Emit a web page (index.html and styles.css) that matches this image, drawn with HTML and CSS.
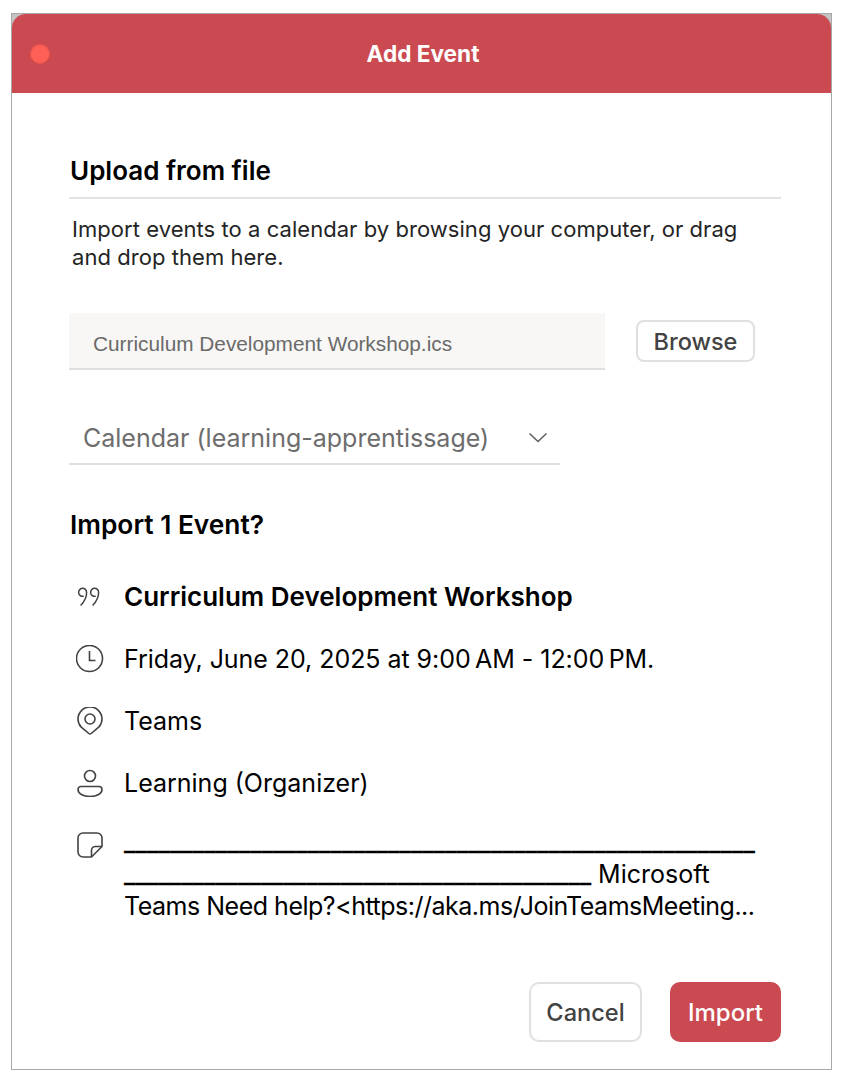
FILE: index.html
```html
<!DOCTYPE html>
<html lang="en">
<head>
<meta charset="utf-8">
<title>Add Event</title>
<link rel="stylesheet" href="styles.css">
</head>
<body>
<div class="window">
  <header class="titlebar">
    <span class="close-dot"></span>
    <span class="title">Add Event</span>
  </header>
  <main class="content">
    <h2 class="section-title">Upload from file</h2>
    <p class="intro">Import events to a calendar by browsing your computer, or drag and drop them here.</p>
    <div class="upload-row">
      <div class="file-field">Curriculum Development Workshop.ics</div>
      <button class="btn btn-browse">Browse</button>
    </div>
    <div class="select-field">
      <span>Calendar (learning-apprentissage)</span>
      <svg class="chevron" width="20" height="12" viewBox="0 0 20 12"><path d="M1.500 1.500 10 9.500l8.500-8"/></svg>
    </div>
    <h3 class="import-title">Import 1 Event?</h3>
    <div class="details">
      <div class="row">
        <svg class="icon icon-thin" width="28" height="28" viewBox="0 0 28 28"><path d="M7.700 13.200a4 4 0 1 1 2.900-3.800c0 5-2.400 9.300-6 13.200M19.700 13.200a4 4 0 1 1 2.900-3.800c0 5-2.400 9.300-6 13.200"/></svg>
        <strong class="row-text">Curriculum Development Workshop</strong>
      </div>
      <div class="row">
        <svg class="icon" width="28" height="28" viewBox="0 0 28 28"><circle cx="13.500" cy="13.500" r="13"/><path d="M13.500 6v9.500h6"/></svg>
        <span class="row-text date-text">Friday, June 20, 2025 at 9:00&#8239;AM - 12:00&#8239;PM.</span>
      </div>
      <div class="row">
        <svg class="icon" width="28" height="28" viewBox="0 0 28 28"><path d="M12.800 26.500 5 19.900a12 12 0 1 1 18 0l-7.800 6.600a1.800 1.800 0 0 1-2.400 0z"/><circle cx="14" cy="12" r="5"/></svg>
        <span class="row-text">Teams</span>
      </div>
      <div class="row">
        <svg class="icon" width="28" height="28" viewBox="0 0 28 28"><circle cx="14" cy="7" r="5.500"/><path d="M5 17.500h18a3 3 0 0 1 3 3c0 4-5 7-12 7s-12-3-12-7a3 3 0 0 1 3-3z"/></svg>
        <span class="row-text">Learning (Organizer)</span>
      </div>
      <div class="row row-note">
        <svg class="icon icon-note" width="28" height="28" viewBox="0 0 28 28"><path d="M7 2h14a5 5 0 0 1 5 5v8.500L15.500 26H7a5 5 0 0 1-5-5V7a5 5 0 0 1 5-5z"/><path d="M26 15.500h-6.500a4 4 0 0 0-4 4V26"/></svg>
        <p class="note"><span class="rule-first">_______________________________________________________</span><wbr><span class="rule-second">_________________________________________</span> Microsoft <span class="note-tail">Teams Need help?&lt;https://aka.ms/JoinTeamsMeeting...</span></p>
      </div>
    </div>
    <footer class="actions">
      <button class="btn btn-cancel">Cancel</button>
      <button class="btn btn-import">Import</button>
    </footer>
  </main>
</div>
</body>
</html>
```

FILE: styles.css
```css
* { box-sizing: border-box; }
html, body { margin: 0; padding: 0; background: #fff; }
body {
  width: 848px;
  height: 1084px;
  overflow: hidden;
  padding: 13px 0 0 11px;
  font-family: Inter, "Liberation Sans", sans-serif;
  color: #000;
}
.window {
  width: 821px;
  height: 1057px;
  border: 1px solid #a8a8a8;
  background: #c4c4c4;
  display: flex;
  flex-direction: column;
}
.titlebar {
  height: 79px;
  flex: none;
  padding-left: 3px;
  background: #cb4a51;
  border-radius: 14px 14px 0 0;
  display: flex;
  align-items: center;
  justify-content: center;
  position: relative;
}
.close-dot {
  position: absolute;
  left: 17.500px;
  top: 30px;
  width: 20px;
  height: 20px;
  border-radius: 50%;
  background: #fe5f57;
  border: 1px solid #e8524c;
}
.title { color: #fff; font-size: 22.600px; font-weight: 700; }
.content {
  flex: 1;
  background: #fff;
  padding: 62px 50px 0 57px;
}
.section-title {
  margin: 0;
  font-size: 26px;
  line-height: 32px;
  font-weight: 600;
  padding-bottom: 10px;
  border-bottom: 2px solid #e2e2e2;
  text-indent: 1px;
}
.intro {
  margin: 16px 0 0 3px;
  font-size: 22px;
  letter-spacing: .05px;
  line-height: 28px;
  color: #242424;
  width: 690px;
}
.upload-row {
  margin-top: 42px;
  display: flex;
  align-items: center;
  gap: 31px;
}
.file-field {
  width: 536px;
  height: 57px;
  background: #f8f7f6;
  border-bottom: 2px solid #e0dfde;
  padding: 17px 0 0 24px;
  font-family: "Liberation Sans", Arial, sans-serif;
  font-size: 20.800px;
  line-height: 28px;
  color: #6a6a6a;
}
.btn {
  font-family: Inter, "Liberation Sans", sans-serif;
  font-weight: 500;
  background: #fff;
  color: #424242;
  border: 2px solid #e0e0e0;
  padding: 0;
  cursor: pointer;
}
.btn-browse {
  width: 119px;
  height: 42px;
  padding-top: 1px;
  border-radius: 8px;
  font-size: 23.500px;
  margin-top: -2px;
}
.select-field {
  margin-top: 42px;
  width: 491px;
  height: 53px;
  padding: 0 12px 0 14px;
  border-bottom: 2px solid #e0e0e0;
  display: flex;
  align-items: center;
  justify-content: space-between;
  font-size: 25px;
  color: #6d6d6d;
}
.chevron { fill: none; stroke: #616161; stroke-width: 1.600; }
.import-title {
  margin: 44px 0 0 1px;
  font-size: 26.300px;
  line-height: 32px;
  font-weight: 600;
}
.details {
  margin-top: 40px;
  display: flex;
  flex-direction: column;
  gap: 30px;
}
.row {
  display: flex;
  align-items: center;
  gap: 20px;
  padding-left: 7px;
  font-size: 25px;
  line-height: 32px;
}
.row-note { align-items: flex-start; }
.row strong { font-size: 26px; font-weight: 600; }
.date-text { letter-spacing: -.05px; }
.icon { flex: none; fill: none; stroke: #424242; stroke-width: 1.600; }
.icon-thin { stroke-width: 1.500; }
.icon-note { margin-top: 2px; }
.note {
  margin: -3px 0 0;
  width: 632px;
}
.rule-first, .rule-second { -webkit-text-stroke: .3px #000; }
.rule-first { letter-spacing: .07px; }
.rule-second { letter-spacing: -.01px; }
.note-tail { letter-spacing: -.49px; white-space: nowrap; }
.actions {
  margin-top: 60px;
  display: flex;
  justify-content: flex-end;
  gap: 28px;
}
.btn-cancel, .btn-import {
  height: 60px;
  border-radius: 10px;
  font-size: 24px;
}
.btn-cancel { width: 113px; font-size: 23.600px; }
.btn-import {
  width: 111px;
  background: #cb4a51;
  border-color: #cb4a51;
  color: #fff;
}
```
